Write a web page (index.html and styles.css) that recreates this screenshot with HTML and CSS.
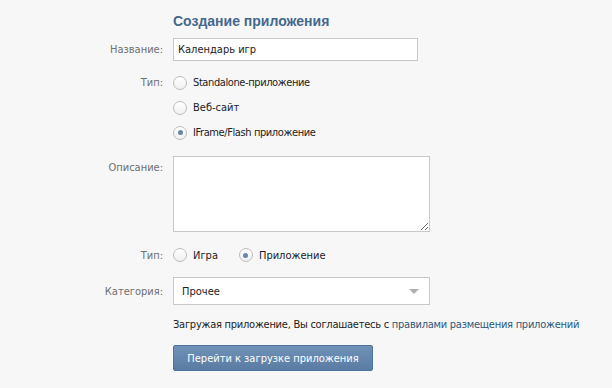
FILE: index.html
```html
<!DOCTYPE html>
<html lang="ru">
<head>
    <meta charset="UTF-8">
    <title>Создание приложения</title>
    <link rel="stylesheet" href="styles.css">
</head>
<body>
<div class="form">
    <div class="title">Создание приложения</div>

    <div class="row row-name">
        <div class="label">Название:</div>
        <input type="text" class="input-field" value="Календарь игр">
    </div>

    <div class="row row-kind">
        <div class="label">Тип:</div>
        <div class="radios">
            <div class="radio latin"><span class="circle"></span>Standalone-приложение</div>
            <div class="radio"><span class="circle"></span>Веб-сайт</div>
            <div class="radio latin"><span class="circle on"></span>IFrame/Flash приложение</div>
        </div>
    </div>

    <div class="row row-desc">
        <div class="label">Описание:</div>
        <textarea class="text-area"></textarea>
    </div>

    <div class="row row-type">
        <div class="label">Тип:</div>
        <div class="radio inline"><span class="circle"></span>Игра</div>
        <div class="radio inline"><span class="circle on"></span>Приложение</div>
    </div>

    <div class="row row-cat">
        <div class="label">Категория:</div>
        <div class="select">
            <span>Прочее</span>
            <span class="arrow"></span>
        </div>
    </div>

    <div class="row row-terms">
        <div class="label"></div>
        <div class="terms">Загружая приложение, Вы соглашаетесь с <a href="#">правилами размещения приложений</a></div>
    </div>

    <div class="row row-btn">
        <div class="label"></div>
        <button class="btn">Перейти к загрузке приложения</button>
    </div>
</div>
</body>
</html>
```

FILE: styles.css
```css
body {
    margin: 0;
    padding: 0;
    background-color: #f7f7f7;
    font-family: "DejaVu Sans Condensed", "DejaVu Sans", sans-serif;
    font-stretch: condensed;
    font-size: 11px;
    color: #222;
}
.form {
    padding-top: 12px;
}
.title {
    margin-left: 173px;
    font-family: "Liberation Sans", Arial, sans-serif;
    font-stretch: normal;
    font-size: 14px;
    font-weight: bold;
    line-height: 18px;
    color: #45688e;
    margin-bottom: 8px;
}
.row {
    display: flex;
    align-items: center;
}
.label {
    width: 163px;
    margin-right: 10px;
    text-align: right;
    color: #6f6f6f;
    flex-shrink: 0;
}
.input-field {
    box-sizing: border-box;
    width: 245px;
    height: 23px;
    padding: 0 4px;
    border: 1px solid #c8c8c8;
    background-color: #fff;
    font-family: inherit;
    font-stretch: condensed;
    font-size: 11px;
    color: #222;
    outline: none;
}
.row-kind {
    align-items: flex-start;
    margin-top: 9px;
}
.row-kind .label {
    line-height: 25px;
}
.radio {
    display: flex;
    align-items: center;
    height: 25px;
}
.radio.latin {
    letter-spacing: -0.4px;
}
.circle {
    box-sizing: border-box;
    width: 14px;
    height: 14px;
    margin-right: 6px;
    border: 1px solid #bdbdbd;
    border-radius: 50%;
    background: linear-gradient(#ffffff, #f0f0f0);
    display: flex;
    align-items: center;
    justify-content: center;
}
.circle.on::after {
    content: "";
    width: 5px;
    height: 5px;
    border-radius: 50%;
    background-color: #6a86a6;
}
.row-desc {
    align-items: flex-start;
    margin-top: 11px;
}
.row-desc .label {
    padding-top: 5px;
}
.text-area {
    box-sizing: border-box;
    width: 257px;
    height: 76px;
    margin: 0;
    border: 1px solid #c8c8c8;
    background-color: #fff;
    font-family: inherit;
    outline: none;
}
.row-type {
    margin-top: 11px;
    height: 24px;
}
.radio.inline {
    margin-right: 21px;
}
.row-cat {
    margin-top: 10px;
}
.select {
    box-sizing: border-box;
    width: 257px;
    height: 28px;
    padding: 0 10px 0 8px;
    border: 1px solid #c8c8c8;
    background-color: #fff;
    display: flex;
    align-items: center;
    justify-content: space-between;
    color: #222;
}
.arrow {
    width: 0;
    height: 0;
    border-left: 5px solid transparent;
    border-right: 5px solid transparent;
    border-top: 5px solid #b0b0b0;
}
.row-terms {
    margin-top: 11px;
    line-height: 18px;
}
.terms {
    white-space: nowrap;
    letter-spacing: -0.25px;
}
.terms a {
    color: #2b587a;
    text-decoration: none;
}
.row-btn {
    margin-top: 11px;
}
.btn {
    width: 200px;
    height: 26px;
    border: 1px solid #4f749c;
    border-radius: 2px;
    background: linear-gradient(#7091b7, #5a7ca3);
    color: #fff;
    font-family: inherit;
    font-stretch: condensed;
    font-size: 11px;
    cursor: pointer;
}
```
